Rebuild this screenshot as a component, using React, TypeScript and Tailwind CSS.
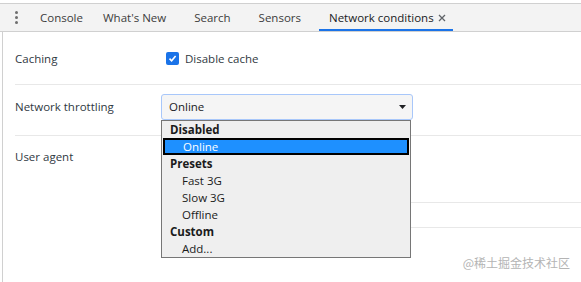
export default function App() {
  const tabs = [
    { label: "Console", closeable: false },
    { label: "What's New", closeable: true },
    { label: "Search", closeable: true },
    { label: "Sensors", closeable: true },
  ];

  return (
    <div
      className="relative h-[282px] w-[581px] overflow-hidden bg-white text-[11.5px] text-[#303942]"
      style={{ fontFamily: '"Open Sans", "Noto Sans", sans-serif' }}
    >
      {/* tab strip */}
      <div className="mt-[3px] flex h-[29px] items-stretch border-y border-[#d0d0d0] bg-[#f3f3f3]">
        <div className="flex w-[30px] items-center justify-center pl-[2px]">
          <div className="flex flex-col gap-[2px]">
            <span className="h-[3px] w-[3px] rounded-full bg-[#6e6e6e]" />
            <span className="h-[3px] w-[3px] rounded-full bg-[#6e6e6e]" />
            <span className="h-[3px] w-[3px] rounded-full bg-[#6e6e6e]" />
          </div>
        </div>
        {tabs.map((t) => (
          <div
            key={t.label}
            className={
              t.closeable
                ? "flex items-center pl-[10px] pr-[18px] text-[#3c3c3c]"
                : "flex items-center px-[10px] text-[#3c3c3c]"
            }
          >
            {t.label}
          </div>
        ))}
        <div className="relative flex items-center gap-[4px] pl-[10px] pr-[7px] text-[#202124]">
          <span>Network conditions</span>
          <svg width="8" height="8" viewBox="0 0 8 8" className="mt-[1px]">
            <path d="M1 1L7 7M7 1L1 7" stroke="#5f6368" strokeWidth="1.3" />
          </svg>
          <span className="absolute bottom-0 left-0 right-0 h-[2px] bg-[#1a73e8]" />
        </div>
      </div>

      {/* panel */}
      <div className="ml-[2px] h-[250px] border-l border-[#d0d0d0] pl-[12px]">
        <div className="flex h-[53px] items-center border-b border-[#e8e8e8] pt-[1px]">
          <div className="w-[151px]">Caching</div>
          <label className="flex items-center gap-[6px]">
            <span className="flex h-[13px] w-[13px] items-center justify-center rounded-[2px] bg-[#1a73e8]">
              <svg width="9" height="9" viewBox="0 0 9 9">
                <path d="M1.5 4.6L3.6 6.7L7.6 2" fill="none" stroke="white" strokeWidth="1.6" />
              </svg>
            </span>
            <span>Disable cache</span>
          </label>
        </div>

        <div className="flex h-[51px] items-start border-b border-[#e8e8e8] pt-[9px]">
          <div className="flex h-[26px] w-[146px] items-center">Network throttling</div>
          <div className="flex h-[26px] w-[252px] items-center justify-between rounded-[3px] border border-[#a8c7fa] bg-[#f5f5f5] pl-[7px] pr-[6px] text-[#202124]">
            <span>Online</span>
            <svg width="7" height="4" viewBox="0 0 7 4">
              <path d="M0 0H7L3.5 4Z" fill="#202124" />
            </svg>
          </div>
        </div>

        <div className="pt-[13px]">
          <div className="h-[16px] leading-[16px]">User agent</div>
          <div className="ml-[146px] mt-[37px] border-b border-[#e8e8e8]" />
          <div className="ml-[146px] mt-[24px] border-b border-[#e8e8e8]" />
        </div>
      </div>

      {/* open select list */}
      <div className="absolute left-[161px] top-[120px] w-[250px] border border-[#767676] bg-[#efefef] text-[11.5px] leading-[17px] text-[#1b1b1b]">
        <div className="pl-[8px] font-bold">Disabled</div>
        <div className="mx-px border-2 border-black bg-[#1e90ff] pl-[18px] leading-[13px] text-white">Online</div>
        <div className="pl-[8px] font-bold">Presets</div>
        <div className="pl-[20px]">Fast 3G</div>
        <div className="pl-[20px]">Slow 3G</div>
        <div className="pl-[20px]">Offline</div>
        <div className="pl-[8px] font-bold">Custom</div>
        <div className="pl-[20px]">Add...</div>
      </div>

      <div
        className="absolute right-[11px] top-[254px] text-[12px] text-[#b4b4b4]"
        style={{ fontFamily: '"Noto Sans CJK SC", sans-serif' }}
      >
        @稀土掘金技术社区
      </div>
    </div>
  );
}
